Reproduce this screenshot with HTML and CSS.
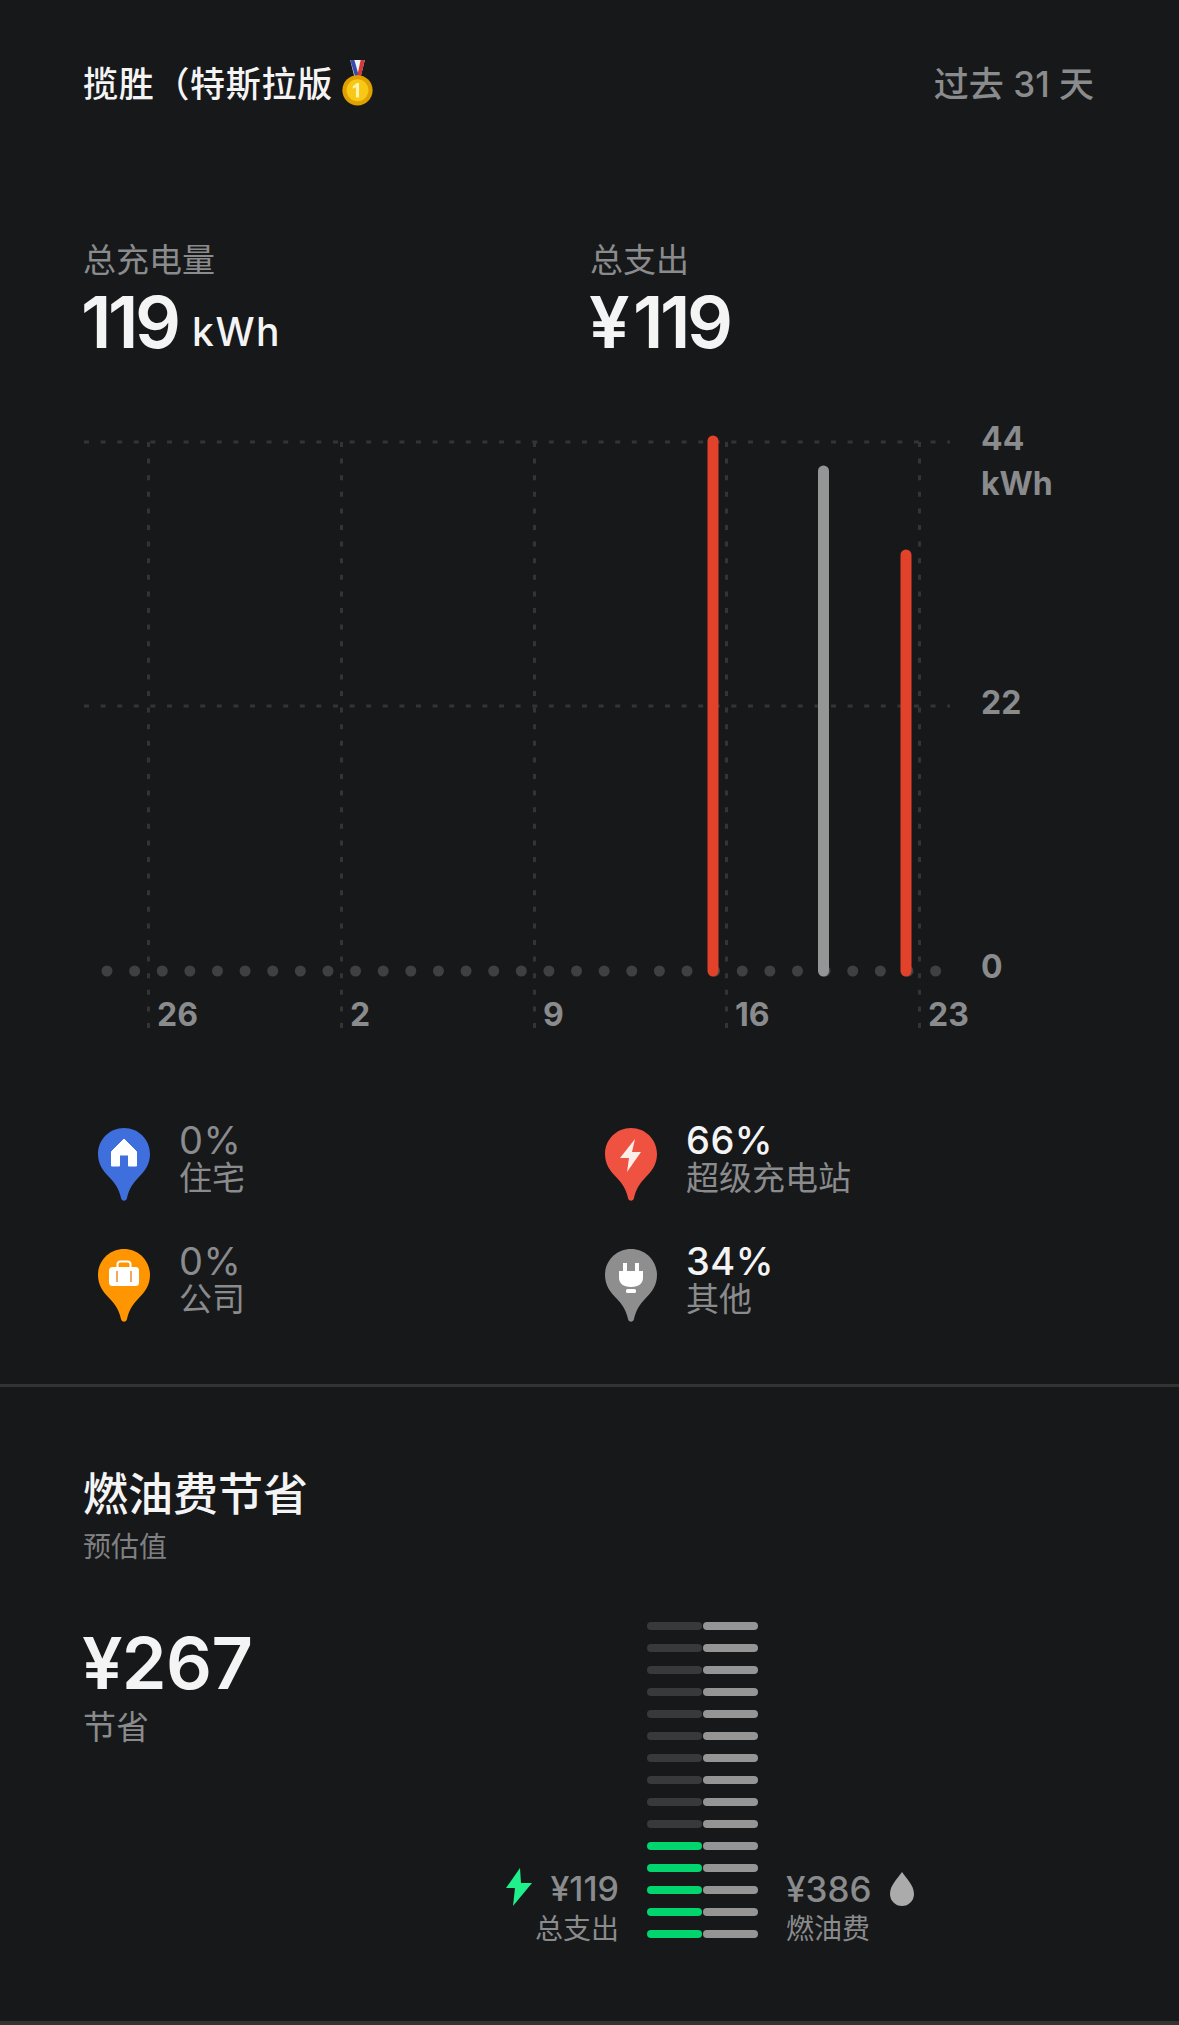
FILE: index.html
```html
<!DOCTYPE html>
<html lang="zh">
<head>
  <meta charset="UTF-8">
  <meta name="viewport" content="width=device-width, initial-scale=1.0">
  <title>充电统计</title>
  <link rel="stylesheet" href="styles.css">
</head>
<body>
  <section class="usage">
    <div class="header">
      <div class="car-name">揽胜（特斯拉版
        <svg class="medal" viewBox="0 0 30 46">
          <path d="M8 1h14l-4 16h-6z" fill="#f2f2f2"/>
          <path d="M8 1h4l4 14-3 3z" fill="#3a4aa8"/>
          <path d="M22 1h-4l-3 14 3 3z" fill="#d23a3a"/>
          <circle cx="15" cy="30" r="14.500" fill="#e0a000"/>
          <circle cx="15" cy="30" r="10.500" fill="#f7c815"/>
          <path d="M16.500 23v14h-3v-10l-3 1.500v-2.500l4-3z" fill="#fff3b0"/>
        </svg>
      </div>
      <div class="period">过去 31 天</div>
    </div>

    <div class="totals">
      <div class="total">
        <div class="total-label">总充电量</div>
        <div class="total-value">119 <span class="unit">kWh</span></div>
      </div>
      <div class="total">
        <div class="total-label">总支出</div>
        <div class="total-value"><span class="yen">¥</span>119</div>
      </div>
    </div>

    <svg class="chart" viewBox="0 0 1179 620" width="1179" height="620">
      <!-- y = 页面 y - 420 -->
      <g class="grid-h">
        <line x1="84" y1="22" x2="950" y2="22"/>
        <line x1="84" y1="286" x2="950" y2="286"/>
      </g>
      <g class="grid-v">
        <line x1="148.500" y1="22" x2="148.500" y2="608"/>
        <line x1="341.500" y1="22" x2="341.500" y2="608"/>
        <line x1="534.500" y1="22" x2="534.500" y2="608"/>
        <line x1="726.500" y1="22" x2="726.500" y2="608"/>
        <line x1="919.500" y1="22" x2="919.500" y2="608"/>
      </g>
      <line class="grid-dots" x1="107" y1="551" x2="945" y2="551"/>
      <g class="bars">
        <line class="bar-red" x1="713" y1="21" x2="713" y2="551"/>
        <line class="bar-gray" x1="823.500" y1="51" x2="823.500" y2="551"/>
        <line class="bar-red" x1="906" y1="135" x2="906" y2="551"/>
      </g>
      <g class="axis">
        <text x="981" y="30">44</text>
        <text x="981" y="75">kWh</text>
        <text x="981" y="294">22</text>
        <text x="981" y="558">0</text>
        <text x="157" y="606">26</text>
        <text x="350" y="606">2</text>
        <text x="543" y="606">9</text>
        <text x="735" y="606">16</text>
        <text x="928" y="606">23</text>
      </g>
    </svg>

    <div class="legend">
      <div class="legend-item">
        <svg class="pin" viewBox="0 0 54 75">
          <path d="M27 1C12.500 1 1 12.500 1 27c0 10 5 17 12 24 5 5 9 11 11 20 .7 3.500 5.300 3.500 6 0 2-9 6-15 11-20 7-7 12-14 12-24C53 12.500 41.500 1 27 1z" fill="#3f6fdc"/>
          <path d="M27 12L14.500 24.500V39h8V28h9v11h8V24.500z" fill="#fff" stroke="#fff" stroke-width="1" stroke-linejoin="round"/>
        </svg>
        <div class="legend-text">
          <div class="pct">0%</div>
          <div class="pct-label">住宅</div>
        </div>
      </div>
      <div class="legend-item">
        <svg class="pin" viewBox="0 0 54 75">
          <path d="M27 1C12.500 1 1 12.500 1 27c0 10 5 17 12 24 5 5 9 11 11 20 .7 3.500 5.300 3.500 6 0 2-9 6-15 11-20 7-7 12-14 12-24C53 12.500 41.500 1 27 1z" fill="#ef5240"/>
          <path d="M31 12L16 31h9l-2 14 14-20h-9z" fill="#fbeee9"/>
        </svg>
        <div class="legend-text">
          <div class="pct pct-on">66%</div>
          <div class="pct-label">超级充电站</div>
        </div>
      </div>
      <div class="legend-item">
        <svg class="pin" viewBox="0 0 54 75">
          <path d="M27 1C12.500 1 1 12.500 1 27c0 10 5 17 12 24 5 5 9 11 11 20 .7 3.500 5.300 3.500 6 0 2-9 6-15 11-20 7-7 12-14 12-24C53 12.500 41.500 1 27 1z" fill="#ff9500"/>
          <path d="M20.500 19v-2.500a3 3 0 0 1 3-3h7a3 3 0 0 1 3 3V19" fill="none" stroke="#fff" stroke-width="2"/>
          <rect x="12" y="19" width="30" height="19" rx="3.500" fill="#fff"/>
          <path d="M20 23v11M34 23v11" stroke="#ef8a2a" stroke-width="1.500"/>
        </svg>
        <div class="legend-text">
          <div class="pct">0%</div>
          <div class="pct-label">公司</div>
        </div>
      </div>
      <div class="legend-item">
        <svg class="pin" viewBox="0 0 54 75">
          <path d="M27 1C12.500 1 1 12.500 1 27c0 10 5 17 12 24 5 5 9 11 11 20 .7 3.500 5.300 3.500 6 0 2-9 6-15 11-20 7-7 12-14 12-24C53 12.500 41.500 1 27 1z" fill="#8e8e8e"/>
          <path d="M19 15h4v8h8v-8h4v8h4v7c0 5-4 9-12 9s-12-4-12-9v-7h4z" fill="#fff"/>
          <rect x="22" y="41" width="10" height="4" rx="1.500" fill="#fff"/>
        </svg>
        <div class="legend-text">
          <div class="pct pct-on">34%</div>
          <div class="pct-label">其他</div>
        </div>
      </div>
    </div>
  </section>

  <section class="savings">
    <h2 class="savings-title">燃油费节省</h2>
    <div class="savings-note">预估值</div>
    <div class="savings-body">
      <div class="savings-total">
        <div class="savings-value">¥267</div>
        <div class="savings-label">节省</div>
      </div>
      <div class="compare">
        <svg class="bolt" viewBox="0 0 26 38">
          <path d="M14 0L0 20h9l-2 18L26 15H15z" fill="#1ff08c"/>
        </svg>
        <div class="compare-side side-ev">
          <div class="compare-value">¥119</div>
          <div class="compare-label">总支出</div>
        </div>
        <div class="meter">
          <div class="meter-row"><span></span><span></span></div>
          <div class="meter-row"><span></span><span></span></div>
          <div class="meter-row"><span></span><span></span></div>
          <div class="meter-row"><span></span><span></span></div>
          <div class="meter-row"><span></span><span></span></div>
          <div class="meter-row"><span></span><span></span></div>
          <div class="meter-row"><span></span><span></span></div>
          <div class="meter-row"><span></span><span></span></div>
          <div class="meter-row"><span></span><span></span></div>
          <div class="meter-row"><span></span><span></span></div>
          <div class="meter-row on"><span></span><span></span></div>
          <div class="meter-row on"><span></span><span></span></div>
          <div class="meter-row on"><span></span><span></span></div>
          <div class="meter-row on"><span></span><span></span></div>
          <div class="meter-row on"><span></span><span></span></div>
        </div>
        <div class="compare-side side-gas">
          <div class="compare-value">¥386</div>
          <div class="compare-label">燃油费</div>
        </div>
        <svg class="drop" viewBox="0 0 24 34">
          <path d="M12 0C8 6 0 13 0 22a12 12 0 0 0 24 0C24 13 16 6 12 0z" fill="#ababab"/>
        </svg>
      </div>
    </div>
  </section>
</body>
</html>
```

FILE: styles.css
```css
/* Global */
body {
  margin: 0;
  height: 2025px;
  box-sizing: border-box;
  background: #17181a;
  color: #f4f4f5;
  font-family: Inter, "Noto Sans CJK SC", sans-serif;
  text-spacing-trim: space-all;
  border-bottom: 4px solid #333;
  overflow: hidden;
}

/* Usage */
.usage {
  height: 1384px;
  border-bottom: 3px solid #333;
}
.header {
  display: flex;
  justify-content: space-between;
  align-items: center;
  padding: 60px 85px 0 84px;
  height: 48px;
}
.car-name {
  display: flex;
  align-items: center;
  margin-left: -1px;
  font-size: 35px;
  font-weight: 500;
  line-height: 48px;
  letter-spacing: .7px;
}
.medal {
  width: 33px;
  height: 48px;
  margin-left: 8px;
  margin-top: -3px;
}
.period {
  font-size: 35px;
  line-height: 48px;
  font-weight: 500;
  color: #8a8b8c;
}

.totals {
  display: grid;
  grid-template-columns: 507px 1fr;
  padding: 132px 0 0 84px;
}
.total-label {
  font-size: 33px;
  line-height: 40px;
  margin-left: -1px;
  color: #8a8b8c;
}
.total-value {
  font-size: 72px;
  line-height: 84px;
  font-weight: 600;
  letter-spacing: -3.500px;
  margin-left: -3px;
}
.yen {
  margin: 0 7px 0 1px;
}
.unit {
  font-size: 39px;
  font-weight: 500;
  letter-spacing: 1.500px;
  vertical-align: 2px;
}

/* Chart */
.chart {
  display: block;
  margin-top: 46px;
}
.grid-h line,
.grid-v line {
  stroke: #333436;
  stroke-width: 3;
  stroke-dasharray: 5 11.600;
}
.grid-dots {
  stroke: #3f4041;
  stroke-width: 11;
  stroke-linecap: round;
  stroke-dasharray: 0 27.620;
}
.bars line {
  stroke-width: 11;
  stroke-linecap: round;
}
.bar-red {
  stroke: #e2412a;
}
.bar-gray {
  stroke: #959596;
}
.axis text {
  fill: #8a8b8c;
  font-size: 32px;
  font-weight: 700;
}

/* Legend */
.legend {
  display: grid;
  grid-template-columns: 507px 1fr;
  row-gap: 46px;
  padding: 87px 0 0 97px;
}
.legend-item {
  display: flex;
  gap: 29px;
}
.legend-text {
  margin: -6px 0 0 -1px;
}
.pin {
  width: 54px;
  height: 75px;
}
.pct {
  font-size: 38px;
  line-height: 38px;
  color: #8a8b8c;
  letter-spacing: .5px;
}
.pct-on {
  color: #f4f4f5;
  font-weight: 500;
}
.pct-label {
  font-size: 33px;
  line-height: 38px;
  color: #8a8b8c;
}

/* Savings */
.savings {
  padding: 78px 0 0 84px;
}
.savings-title {
  margin: 0 0 0 -1px;
  font-size: 45px;
  line-height: 60px;
  font-weight: 500;
}
.savings-note {
  margin: 4px 0 0 -1px;
  font-size: 28px;
  line-height: 36px;
  color: #7f8081;
}
.savings-body {
  display: flex;
  margin-top: 57px;
}
.savings-total {
  width: 422px;
}
.savings-value {
  font-size: 72px;
  line-height: 84px;
  font-weight: 600;
  margin-top: -1px;
  margin-left: -2px;
  letter-spacing: -.7px;
}
.savings-label {
  margin: 2px 0 0 -1px;
  font-size: 33px;
  line-height: 40px;
  color: #8a8b8c;
}

.compare {
  display: flex;
  align-items: flex-end;
}
.bolt {
  width: 26px;
  height: 38px;
  margin-bottom: 32px;
}
.drop {
  width: 24px;
  height: 34px;
  margin-bottom: 32px;
  margin-left: 27px;
}
.compare-side {
  color: #8a8b8c;
  margin-bottom: -9px;
}
.side-ev {
  width: 87px;
  text-align: right;
  margin-right: 28px;
}
.side-gas {
  width: 77px;
  margin-left: 28px;
}
.compare-value {
  font-size: 35px;
  line-height: 44px;
  font-weight: 500;
  white-space: nowrap;
}
.compare-label {
  font-size: 28px;
  line-height: 36px;
  white-space: nowrap;
}
.side-ev .compare-value {
  font-size: 34px;
}
.meter {
  display: flex;
  flex-direction: column;
  gap: 14px;
}
.meter-row {
  display: flex;
  gap: 1px;
}
.meter-row span {
  display: block;
  width: 55px;
  height: 8px;
  border-radius: 4px;
  background: #959596;
}
.meter-row span:first-child {
  background: #38393a;
}
.meter-row.on span:first-child {
  background: #00d56e;
}
```
